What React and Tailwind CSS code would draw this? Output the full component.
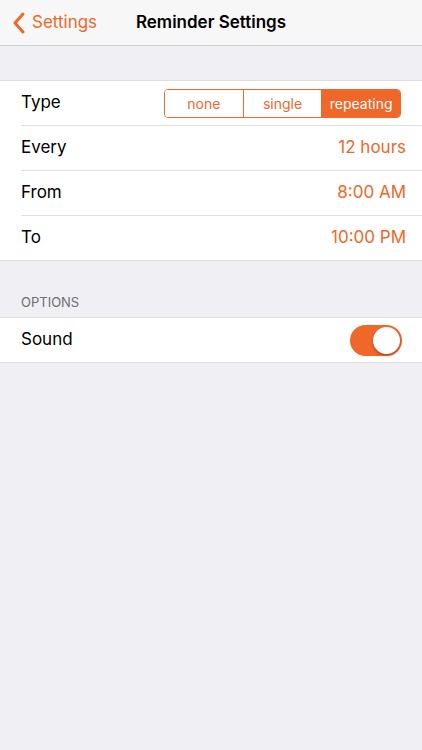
import { useState } from 'react';

const ORANGE = 'text-[#f0672a]';

function Row({ label, children, pad = 'pr-[16px]' }) {
  return (
    <div className={`flex h-[44px] items-center pl-[21px] ${pad}`}>
      <span className="flex-1 text-[17px] text-black">{label}</span>
      {children}
    </div>
  );
}

function Divider() {
  return <div className="ml-[21px] h-px bg-[#e1e1e5]" />;
}

function Segmented({ value, onChange }) {
  const items = ['none', 'single', 'repeating'];
  return (
    <div className="flex h-[29px] w-[237px] overflow-hidden rounded-[4px] border border-[#f0672a]">
      {items.map((it, i) => (
        <button
          key={it}
          onClick={() => onChange(it)}
          className={`flex-1 text-[14px] ${i > 0 ? 'border-l border-[#f0672a]' : ''} ${
            value === it ? 'bg-[#f0672a] text-white' : 'bg-white text-[#f0672a]'
          }`}
        >
          {it}
        </button>
      ))}
    </div>
  );
}

function Toggle({ on, onChange }) {
  return (
    <button
      onClick={() => onChange(!on)}
      className={`relative h-[31px] w-[52px] rounded-full ${on ? 'bg-[#f0672a]' : 'bg-[#e5e5ea]'}`}
    >
      <span
        className={`absolute top-[2px] h-[27px] w-[27px] rounded-full bg-white shadow-[0_2px_3px_rgba(0,0,0,0.25)] ${
          on ? 'left-[23px]' : 'left-[2px]'
        }`}
      />
    </button>
  );
}

export default function App() {
  const [type, setType] = useState('repeating');
  const [sound, setSound] = useState(true);

  return (
    <div
      className="min-h-[750px] w-full bg-[#efeff4]"
      style={{ fontFamily: 'Inter, "Open Sans", "Liberation Sans", sans-serif' }}
    >
      {/* nav bar */}
      <div className="relative flex h-[46px] items-center border-b border-[#cfcfd3] bg-[#f7f7f7]">
        <button className={`flex items-center pl-[12px] pt-[1px] ${ORANGE}`}>
          <svg width="14" height="22" viewBox="0 0 14 22" fill="none">
            <path d="M11 2 L3 11 L11 20" stroke="#f0672a" strokeWidth="3" strokeLinecap="round" strokeLinejoin="round" />
          </svg>
          <span className="ml-[6px] text-[17px]">Settings</span>
        </button>
        <div className="pointer-events-none absolute inset-x-0 top-0 flex h-full items-center justify-center pt-[1px]">
          <span className="text-[17px] font-semibold text-black">Reminder Settings</span>
        </div>
      </div>

      <div className="h-[34px]" />

      <div className="border-y border-[#dedee2] bg-white">
        <Row label="Type" pad="pr-[21px]">
          <Segmented value={type} onChange={setType} />
        </Row>
        <Divider />
        <Row label="Every">
          <span className={`text-[17px] ${ORANGE}`}>12 hours</span>
        </Row>
        <Divider />
        <Row label="From">
          <span className={`text-[17px] ${ORANGE}`}>8:00 AM</span>
        </Row>
        <Divider />
        <Row label="To">
          <span className={`text-[17px] ${ORANGE}`}>10:00 PM</span>
        </Row>
      </div>

      <div className="px-[21px] pb-[7px] pt-[33px] text-[13px] leading-[16px] text-[#6d6d72]">OPTIONS</div>

      <div className="border-y border-[#dedee2] bg-white">
        <Row label="Sound" pad="pr-[20px]">
          <Toggle on={sound} onChange={setSound} />
        </Row>
      </div>
    </div>
  );
}
